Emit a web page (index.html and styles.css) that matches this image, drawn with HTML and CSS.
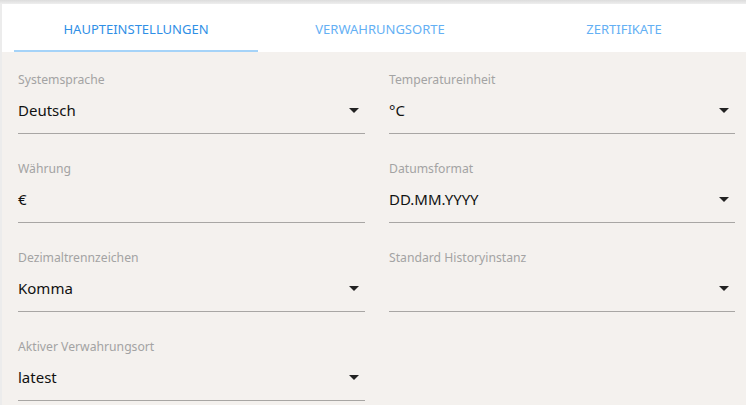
FILE: index.html
```html
<!DOCTYPE html>
<html lang="de">
<head>
<meta charset="utf-8">
<link rel="stylesheet" href="styles.css">
</head>
<body>
<div class="app">
  <div class="topbar"></div>
  <nav class="tabs">
    <div class="tab active">HAUPTEINSTELLUNGEN</div>
    <div class="tab">VERWAHRUNGSORTE</div>
    <div class="tab">ZERTIFIKATE</div>
  </nav>
  <main class="form">
    <div class="field">
      <div class="label">Systemsprache</div>
      <div class="select"><span class="value">Deutsch</span><span class="arrow"></span></div>
    </div>
    <div class="field">
      <div class="label">Temperatureinheit</div>
      <div class="select"><span class="value">°C</span><span class="arrow"></span></div>
    </div>
    <div class="field">
      <div class="label">Währung</div>
      <div class="select"><span class="value">€</span></div>
    </div>
    <div class="field">
      <div class="label">Datumsformat</div>
      <div class="select"><span class="value">DD.MM.YYYY</span><span class="arrow"></span></div>
    </div>
    <div class="field">
      <div class="label">Dezimaltrennzeichen</div>
      <div class="select"><span class="value">Komma</span><span class="arrow"></span></div>
    </div>
    <div class="field">
      <div class="label">Standard Historyinstanz</div>
      <div class="select"><span class="value"></span><span class="arrow"></span></div>
    </div>
    <div class="field">
      <div class="label">Aktiver Verwahrungsort</div>
      <div class="select"><span class="value">latest</span><span class="arrow"></span></div>
    </div>
  </main>
</div>
</body>
</html>
```

FILE: styles.css
```css
html, body {
  margin: 0;
  padding: 0;
  height: 100%;
  overflow: hidden;
}
body {
  background: #f4f1ee;
  font-family: "Noto Sans", "Open Sans", sans-serif;
}
.app {
  border-left: 2px solid #ececec;
  min-height: 100%;
  box-sizing: border-box;
}
.topbar {
  height: 4px;
  background: linear-gradient(#dcdcdc, #eeeeee);
  margin-left: -2px;
}
.tabs {
  display: flex;
  background: #ffffff;
  height: 48px;
  padding-left: 12px;
}
.tab {
  flex: 1;
  display: flex;
  align-items: center;
  justify-content: center;
  font-size: 13px;
  color: #64b0f4;
  box-sizing: border-box;
  padding-top: 4px;
  border-bottom: 2px solid transparent;
}
.tab.active {
  color: #2f8fe6;
  border-bottom-color: #a5d3f8;
}
.form {
  display: grid;
  grid-template-columns: 347px 346px;
  column-gap: 24px;
  row-gap: 27px;
  padding: 20px 11px 0 16px;
}
.label {
  font-size: 12.2px;
  line-height: 16px;
  height: 16px;
  color: #a3a3a3;
}
.select {
  display: flex;
  align-items: center;
  justify-content: space-between;
  padding: 10px 6px 11px 0;
  border-bottom: 1px solid #a8a6a4;
}
.value {
  font-size: 15px;
  line-height: 24px;
  height: 24px;
  color: #111;
}
.arrow {
  width: 0;
  height: 0;
  border-left: 5px solid transparent;
  border-right: 5px solid transparent;
  border-top: 5px solid #222;
}
```
